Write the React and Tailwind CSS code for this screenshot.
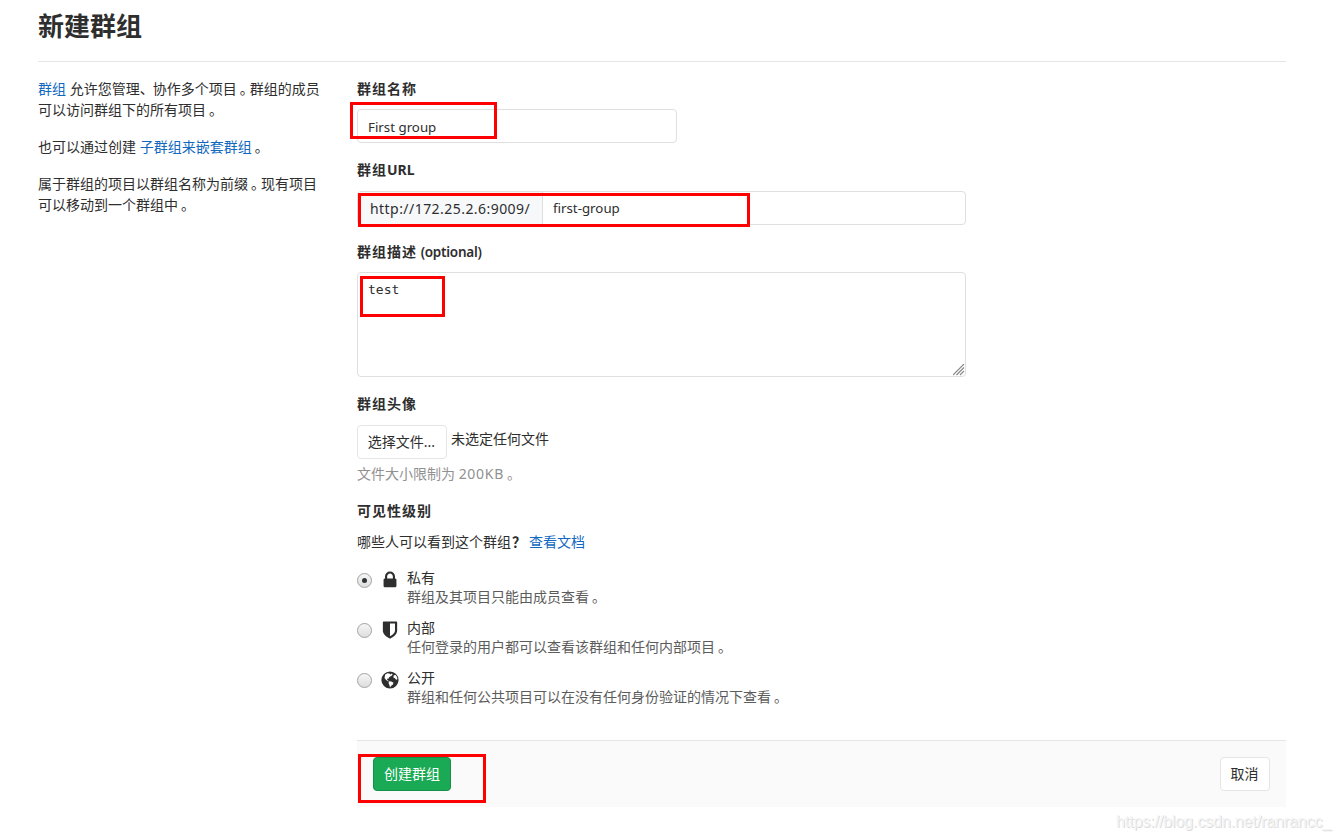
const LABEL = 'block text-[14px] leading-[20px] font-bold text-[#2e2e2e]';
const CJK_BOLD = 'tracking-[1px]';

const levels = [
  { id: 'private', name: '私有', hint: '群组及其项目只能由成员查看', icon: LockIcon, checked: true },
  { id: 'internal', name: '内部', hint: '任何登录的用户都可以查看该群组和任何内部项目', icon: ShieldIcon },
  { id: 'public', name: '公开', hint: '群组和任何公共项目可以在没有任何身份验证的情况下查看', icon: GlobeIcon },
];

function LockIcon() {
  return (
    <svg viewBox="0 0 1792 1792" className="size-5" fill="#2e2e2e">
      <path d="M640 768h512v-192q0-106-75-181t-181-75-181 75-75 181v192zm832 96v576q0 40-28 68t-68 28h-960q-40 0-68-28t-28-68v-576q0-40 28-68t68-28h32v-192q0-184 132-316t316-132 316 132 132 316v192h32q40 0 68 28t28 68z" />
    </svg>
  );
}

function ShieldIcon() {
  return (
    <svg viewBox="0 0 1792 1792" className="size-5" fill="#2e2e2e">
      <path d="M1344 960v-640h-448v1137q119-63 213-137 235-184 235-360zm192-768v768q0 86-33.5 170.5t-83 150-118 127.5-126.5 103-121 77.5-89.5 49.5-42.5 20q-12 6-26 6t-26-6q-16-7-42.5-20t-89.5-49.5-121-77.5-126.5-103-118-127.5-83-150-33.5-170.5v-768q0-26 19-45t45-19h1152q26 0 45 19t19 45z" />
    </svg>
  );
}

function GlobeIcon() {
  return (
    <svg viewBox="0 0 20 20" className="size-5">
      <circle cx="10" cy="10" r="8.6" fill="#2e2e2e" />
      <path d="M5.200 4.600 7.600 3.200l1.800.4 1 1 1.400-1 .9.900-1.500 1.500-1.900 1-.7 1.500-1.500.2.200 1.300 1.500 1-.5.4-2.200-1.300-1.600-2z" fill="#fff" />
      <path d="m9.200 11.300 2.100.1 2.200 1.400-.8 1.900-1.600 1-1 1.700-.8-2.700-.8-1.700z" fill="#fff" />
      <path d="m13.700 5.400 1.800-.7 1.500 2.200.5 2.300-1.300.6-1.300-1.500-1.600-.8z" fill="#fff" />
    </svg>
  );
}

function Radio({ checked }) {
  return (
    <span className="mt-[5px] flex size-[15px] shrink-0 items-center justify-center rounded-full border border-[#a2a2a2] bg-linear-to-b from-[#f6f6f6] to-[#dedede]">
      {checked && <span className="size-[5px] rounded-full bg-[#2e3436]" />}
    </span>
  );
}

// full-width stop, nudged right inside its cell
function Stop() {
  return <span className="-mr-[4px] ml-[3px]">。</span>;
}

function Intro() {
  return (
    <div className="w-[319px] shrink-0 pt-4 text-[14px] leading-[21px]">
      <p className="whitespace-nowrap">
        <a className="text-[#1068bf]">群组</a> 允许您管理<span className="-mr-px">、</span>协作多个项目<Stop />群组的成员<br />可以访问群组下的所有项目<Stop />
      </p>
      <p className="mt-4 whitespace-nowrap">
        也可以通过创建 <a className="text-[#1068bf]">子群组来嵌套群组</a><Stop />
      </p>
      <p className="mt-4 whitespace-nowrap">
        属于群组的项目以群组名称为前缀<Stop />现有项目<br />可以移动到一个群组中<Stop />
      </p>
    </div>
  );
}

export default function App() {
  return (
    <div className="relative h-[840px] w-[1341px] overflow-hidden bg-white pl-[38px] font-['Noto_Sans','Noto_Sans_CJK_SC',sans-serif] text-[14px] text-[#2e2e2e]" lang="zh-CN">
      <header className="h-[62px] w-[1248px] border-b border-[#e5e5e5] pt-[8px]">
        <h1 className="text-[26px] leading-[36px] font-bold">新建群组</h1>
      </header>

      <main className="flex">
        <Intro />

        <form className="w-[929px] pt-[17px]">
          <label className={`${LABEL} ${CJK_BOLD}`}>群组名称</label>
          <div className="mt-[10px] flex h-[34px] w-[320px] items-center rounded-[4px] border border-[#dfdfdf] pt-[3px] pl-[10px] text-[13.3px]">
            First group
          </div>

          <label className={`${LABEL} mt-[17px]`}><span className={CJK_BOLD}>群组</span>URL</label>
          <div className="mt-[11px] flex h-[34px] w-[609px] overflow-hidden rounded-[4px] border border-[#dfdfdf]">
            <span className="flex w-[185px] shrink-0 items-center border-r border-[#dfdfdf] bg-[#f7f8fa] pl-3 text-[14px] tracking-[0.45px]">http://172.25.2.6:9009/</span>
            <span className="flex items-center pt-px pl-[10px] text-[13.3px]">first-group</span>
          </div>

          <label className={`${LABEL} mt-[17px]`}>
            <span className={CJK_BOLD}>群组描述</span> <span className="text-[13.5px] font-semibold tracking-[-0.25px]">(optional)</span>
          </label>
          <div className="mt-[10px] flex h-[105px] w-[609px] justify-between rounded-[4px] border border-[#dfdfdf] pl-[10px]">
            <span className="pt-[7px] font-['DejaVu_Sans_Mono',monospace] text-[13px] leading-[20px]">test</span>
            <svg viewBox="0 0 12 12" className="size-3 self-end" stroke="#8a8a8a" strokeWidth="1.2">
              <path d="M0 11 11 0M3.500 11 11 3.500M7 11l4-4" />
            </svg>
          </div>

          <label className={`${LABEL} ${CJK_BOLD} mt-[17px]`}>群组头像</label>
          <div className="mt-[11px] flex h-[34px]">
            <button type="button" className="h-[34px] w-[90px] rounded-[4px] border border-[#e5e5e5] bg-white pr-px pb-[2px]">选择文件...</button>
            <span className="ml-1 pt-[4px] leading-[20px]">未选定任何文件</span>
          </div>
          <p className="mt-[5px] leading-[20px] text-[#919191]">文件大小限制为 <span className="tracking-[0.7px]">200KB</span><Stop /></p>

          <label className={`${LABEL} ${CJK_BOLD} mt-[17px]`}>可见性级别</label>
          <p className="mt-[11px] leading-[20px]">
            哪些人可以看到这个群组<span className="mr-[-1px] ml-[1px] font-bold">？</span><a className="ml-1 text-[#1068bf]">查看文档</a>
          </p>

          <div className="mt-[16px] flex flex-col">
            {levels.map(({ id, name, hint, icon: Icon, checked }) => (
              <div key={id} className="flex h-[50px]">
                <Radio checked={checked} />
                <span className="mt-[2px] ml-[7.5px] shrink-0"><Icon /></span>
                <div className="ml-[7.5px] whitespace-nowrap">
                  <div className="leading-[20px]">{name}</div>
                  <div className="-mt-px leading-[19px] text-[#5c5c5c]">{hint}<Stop /></div>
                </div>
              </div>
            ))}
          </div>

          <div className="mt-[22px] flex h-[67px] items-start justify-between border-t border-[#e5e5e5] bg-[#fafafa] px-4 pt-4">
            <button type="button" className="h-[34px] w-[78px] rounded-[4px] border border-[#168f48] bg-[#1aaa55] pb-[2px] text-white">创建群组</button>
            <button type="button" className="h-[34px] w-[50px] rounded-[4px] border border-[#e5e5e5] bg-white pr-px pb-[2px]">取消</button>
          </div>
        </form>
      </main>

      {/* highlight frames over the filled-in fields */}
      <div className="absolute top-[102px] left-[350px] h-[37px] w-[147px] border-3 border-[#ff0000]" />
      <div className="absolute top-[193px] left-[358px] h-[34px] w-[392px] border-3 border-[#ff0000]" />
      <div className="absolute top-[276px] left-[360px] h-[41px] w-[85px] border-3 border-[#ff0000]" />
      <div className="absolute top-[754px] left-[358px] h-[49px] w-[128px] border-3 border-[#ff0000]" />

      <span className="absolute top-[810px] left-[1116px] font-['Liberation_Sans',sans-serif] text-[16px] leading-[24px] tracking-[-0.12px] text-[#f4f4f4] [text-shadow:1px_1px_0_#dcdcdc]">
        https://blog.csdn.net/ranrancc_
      </span>
    </div>
  );
}
